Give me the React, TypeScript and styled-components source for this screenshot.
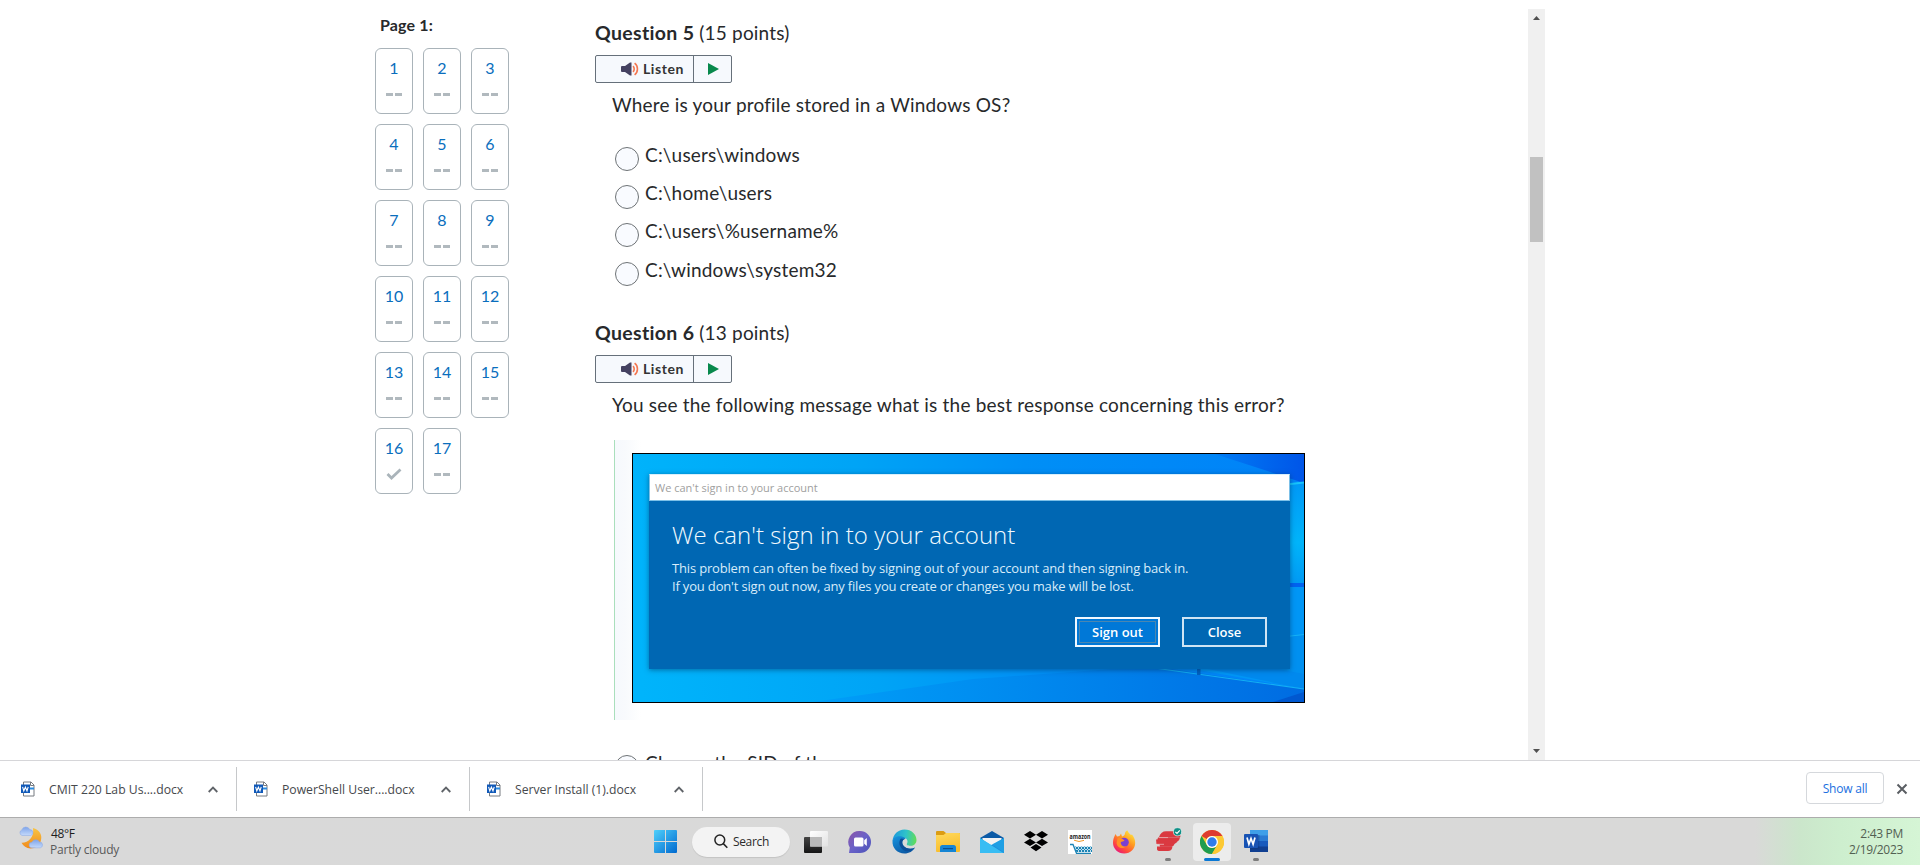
import React from 'react';
import styled, { createGlobalStyle } from 'styled-components';

const GlobalStyle = createGlobalStyle`
  * { box-sizing: border-box; }
  body { margin: 0; background: #fff; overflow: hidden; }
`;

const lato = `Lato, "Liberation Sans", sans-serif`;
const segoe = `"Open Sans", "Noto Sans", sans-serif`;

const Screen = styled.div`
  width: 1920px;
  height: 865px;
  display: flex;
  flex-direction: column;
  overflow: hidden;
  background: #fff;
`;

/* ---------- quiz page ---------- */

const Page = styled.main`
  height: 760px;
  display: flex;
  overflow: hidden;
  padding-left: 375px;
  font-family: ${lato};
  color: #27292b;
`;

const Sidebar = styled.nav`
  width: 220px;
  padding-top: 15px;
`;

const PageLabel = styled.div`
  padding-left: 5px;
  font-size: 16px;
  font-weight: 700;
  line-height: 20px;
  letter-spacing: 0.15px;
`;

const TileGrid = styled.div`
  margin-top: 13px;
  display: grid;
  grid-template-columns: repeat(3, 38px);
  gap: 10px;
`;

const Tile = styled.a`
  height: 66px;
  padding-top: 9px;
  border: 1px solid #a9b3b9;
  border-radius: 6px;
  display: flex;
  flex-direction: column;
  align-items: center;
`;

const TileNumber = styled.span`
  font-size: 16px;
  line-height: 20px;
  color: #0a6ebd;
`;

const TileState = styled.span`
  height: 32px;
  display: flex;
  align-items: center;
  gap: 2px;
`;

const Dash = styled.span`
  width: 7px;
  height: 3px;
  background: #b1b9be;
`;

const Questions = styled.section`
  width: 933px;
  padding-top: 21px;
`;

const Question = styled.article`
  margin-bottom: 35px;
`;

const Heading = styled.h2`
  margin: 0;
  font-size: 19px;
  font-weight: 400;
  line-height: 24px;
  letter-spacing: 0.19px;
  white-space: nowrap;

  b {
    font-size: 19.5px;
    letter-spacing: 0.32px;
  }
`;

const Listen = styled.div`
  width: 137px;
  height: 28px;
  margin-top: 10px;
  display: flex;
  border: 1px solid #66707a;
  border-radius: 2px;
  background: #f6f9fd;
`;

const ListenMain = styled.button`
  width: 98px;
  padding: 0 0 0 25px;
  border: 0;
  border-right: 1px solid #66707a;
  background: none;
  display: flex;
  align-items: center;
  gap: 4px;
  font: 700 14px/26px ${lato};
  letter-spacing: 0.6px;
  color: #333;
`;

const ListenPlay = styled.button`
  flex: 1;
  padding: 0 0 0 1px;
  border: 0;
  background: none;
  display: flex;
  align-items: center;
  justify-content: center;
`;

const QuestionBody = styled.div`
  margin-top: 10px;
  padding-left: 17px;
`;

const Prompt = styled.p`
  margin: 0;
  font-size: 19px;
  line-height: 24px;
  letter-spacing: 0.2px;
  white-space: nowrap;
`;

const Options = styled.div<{ $top: number }>`
  margin-top: ${(p) => p.$top}px;
  padding-left: 3px;
  display: flex;
  flex-direction: column;
  gap: 10px;
`;

const Option = styled.label`
  height: 28px;
  display: flex;
  gap: 6px;
  font-size: 19px;
  line-height: 24px;
  letter-spacing: 0.19px;
  white-space: nowrap;

  &:nth-child(4) { margin-top: 1px; }
`;

const Radio = styled.span`
  width: 24px;
  height: 24px;
  margin-top: 4px;
  flex: none;
  border: 1px solid #6e7376;
  border-radius: 50%;
  background: #f9fbff;
`;

const Quote = styled.blockquote`
  height: 280px;
  margin: 23px 0 0 2px;
  padding: 13px 0 0 17px;
  border-left: 1px solid #a9dfbc;
  background: linear-gradient(90deg, #f6f9fd 0, #f8fafd 10px, #fcfdfe 20px, #fff 26px);
`;

const Shot = styled.figure`
  position: relative;
  width: 673px;
  height: 250px;
  margin: 0;
  padding: 20px 0 0 16px;
  border: 1px solid #000;
  overflow: hidden;
`;

const Wallpaper = styled.svg`
  position: absolute;
  inset: 0;
`;

const Dialog = styled.div`
  position: relative;
  width: 641px;
  height: 195px;
  background: #0067b3;
  box-shadow: 0 1px 5px rgba(0, 50, 90, 0.55);
  font-family: ${segoe};
  color: #d8ecfa;
`;

const DialogBar = styled.div`
  height: 27px;
  padding-left: 5px;
  background: #fff;
  border: 1px solid #7cc0e8;
  border-top-color: #d9effb;
  font-size: 11px;
  line-height: 25px;
  color: #a0a0a0;
`;

const DialogBody = styled.div`
  padding: 18px 23px 0;
`;

const DialogTitle = styled.div`
  font-size: 24px;
  font-weight: 300;
  line-height: 32px;
  letter-spacing: 0.03px;
  color: #f2fafe;
`;

const DialogText = styled.div`
  margin-top: 8px;
  font-size: 13px;
  line-height: 18px;
  letter-spacing: -0.17px;
  white-space: nowrap;
`;

const DialogButtons = styled.div`
  margin-top: 22px;
  display: flex;
  justify-content: flex-end;
  gap: 22px;
`;

const DialogButton = styled.button<{ $focus?: boolean }>`
  width: 85px;
  height: 30px;
  padding: 0;
  border: 2px solid ${(p) => (p.$focus ? '#f0f8ff' : '#cfe4f4')};
  background: ${(p) => (p.$focus ? '#0078d7' : '#0067b3')};
  outline: ${(p) => (p.$focus ? '1px solid #4b86b0' : 'none')};
  outline-offset: -5px;
  font: 600 13px/24px ${segoe};
  color: #fff;
`;

const Scrollbar = styled.div`
  width: 17px;
  height: 751px;
  margin-top: 9px;
  background: #f0f0f0;
  display: flex;
  flex-direction: column;
  align-items: center;
`;

const Arrow = styled.svg<{ $end?: boolean }>`
  margin-top: ${(p) => (p.$end ? 'auto' : '7px')};
  margin-bottom: ${(p) => (p.$end ? '7px' : '0')};
`;

const Thumb = styled.div`
  width: 13px;
  height: 85px;
  margin-top: 137px;
  background: #c1c1c1;
`;

/* ---------- download shelf ---------- */

const Shelf = styled.footer`
  height: 57px;
  display: flex;
  border-top: 1px solid #d6d6d9;
  background: #fff;
  font-family: ${segoe};
`;

const Download = styled.div`
  width: 233px;
  height: 44px;
  margin-top: 6px;
  padding: 0 18px 0 17px;
  border-right: 1px solid #c6c8ca;
  display: flex;
  align-items: center;

  &:first-child { width: 237px; padding-left: 21px; }
`;

const FileName = styled.span`
  margin: 1px auto 0 14px;
  font-size: 12.2px;
  color: #46484c;
  white-space: nowrap;
`;

const ShowAll = styled.button`
  width: 78px;
  height: 32px;
  margin: 11px 0 0 auto;
  padding: 0;
  border: 1px solid #d5d8dc;
  border-radius: 4px;
  background: #fff;
  font: 500 12px ${segoe};
  letter-spacing: -0.2px;
  color: #1a6fe0;
`;

const CloseMark = styled.svg`
  margin: 22px 12px 0 12px;
`;

/* ---------- taskbar ---------- */

const Taskbar = styled.footer`
  height: 48px;
  display: flex;
  align-items: center;
  border-top: 1px solid #adadad;
  background: linear-gradient(90deg, #d9d9d9 0, #d9d9d8 1755px, #cbe6cb 1800px, #cdeece 1840px, #d5f5d5 1920px);
  font-family: ${segoe};
  font-size: 12px;
`;

const Weather = styled.div`
  width: 643px;
  padding: 0 0 0 19px;
  display: flex;
  gap: 7px;
  line-height: 16px;
  letter-spacing: -0.22px;
  color: #1d1d1d;

  p { margin: 0; }
  p:first-child { padding-left: 1px; letter-spacing: -0.4px; }
  p + p { color: #5a5a5a; }
`;

const TaskItem = styled.div<{ $active?: boolean; $gap?: number }>`
  position: relative;
  width: 38px;
  height: 38px;
  margin: 0 3px 0 ${(p) => 3 + (p.$gap || 0)}px;
  border-radius: 4px;
  background: ${(p) => (p.$active ? '#ececec' : 'transparent')};
  display: flex;
  align-items: center;
  justify-content: center;
`;

const Indicator = styled.span<{ $active?: boolean }>`
  position: absolute;
  bottom: 0;
  left: 50%;
  width: ${(p) => (p.$active ? 16 : 6)}px;
  height: 3px;
  transform: translateX(-50%);
  border-radius: 2px;
  background: ${(p) => (p.$active ? '#0a78d4' : '#7c7c7c')};
`;

const SearchPill = styled.div`
  width: 98px;
  height: 30px;
  margin-left: 5px;
  padding-left: 22px;
  border-radius: 15px;
  background: #f3f3f3;
  box-shadow: 0 1px 1px rgba(0, 0, 0, 0.1);
  display: flex;
  align-items: center;
  gap: 5px;
  letter-spacing: -0.35px;
  color: #2b2b2b;
`;

const Clock = styled.div`
  margin-left: auto;
  padding-right: 17px;
  text-align: right;
  line-height: 16px;
  letter-spacing: -0.32px;
  color: #526052;
`;

/* ---------- drawings ---------- */

const Speaker = () => (
  <svg width="18" height="14" viewBox="0 0 18 14">
    <path d="M0 4.5 1 4H4L9 0.5H10.5V13.5H9L4 10H1L0 9.5Z" fill="#454261" />
    <path d="M12 4.2C13.6 5.6 13.6 8.4 12 9.8M13.6 1.2C17.4 4 17.4 10 13.6 12.8" fill="none" stroke="#f4764f" strokeWidth="1.6" />
  </svg>
);

const WordFile = () => (
  <svg width="14" height="16" viewBox="0 0 14 16">
    <path d="M2.5 4V1H10L13 4V15H2.5V12" fill="#fff" stroke="#777b80" />
    <path d="M9.5 1V4.5H13" fill="none" stroke="#777b80" />
    <rect x="8" y="6.5" width="5" height="2" fill="#2b8be0" />
    <rect x="0" y="3.5" width="9" height="8.5" fill="#1059b8" />
    <path d="M1.6 5.8 2.8 9.8 4.4 6.2 6 9.8 7.2 5.8" fill="none" stroke="#fff" strokeWidth="1.1" />
  </svg>
);

const Caret = () => (
  <svg width="10" height="7" viewBox="0 0 10 7">
    <path d="M0.7 6 5 1.6 9.3 6" fill="none" stroke="#5f6368" strokeWidth="1.8" />
  </svg>
);

const WeatherIcon = () => (
  <svg width="24" height="24" viewBox="0 0 24 24">
    <defs>
      <linearGradient id="moon" x1="0" y1="0" x2="0" y2="1">
        <stop offset="0" stopColor="#f8c443" />
        <stop offset="1" stopColor="#f08a1c" />
      </linearGradient>
      <linearGradient id="cloud" x1="0" y1="0" x2="0" y2="1">
        <stop offset="0" stopColor="#7ea4ea" />
        <stop offset="1" stopColor="#c3d9fb" />
      </linearGradient>
    </defs>
    <path d="M14 2C20 3.5 23.5 8.5 22 14C21 19.5 16.500 22.500 11.500 22.500C7.500 22.300 4.200 20 2.500 16.700C9 17 15.500 11.500 14 2Z" fill="url(#moon)" />
    <path d="M3 9.500A3 3 0 0 1 2.800 3.900A4.300 4.300 0 0 1 10.800 3.600A3 3 0 0 1 11.700 9.500Z" fill="url(#cloud)" stroke="#86a7e6" strokeWidth="0.5" />
    <path d="M13 21.800A2.800 2.800 0 0 1 12.800 16.200A4.300 4.300 0 0 1 20.500 15.900A3 3 0 0 1 21.300 21.800Z" fill="url(#cloud)" stroke="#86a7e6" strokeWidth="0.5" />
  </svg>
);

const WindowsIcon = () => (
  <svg width="23" height="23" viewBox="0 0 23 23">
    <defs>
      <linearGradient id="win" x1="0" y1="0" x2="23" y2="23" gradientUnits="userSpaceOnUse">
        <stop offset="0" stopColor="#4fd0fb" />
        <stop offset="1" stopColor="#0069cf" />
      </linearGradient>
    </defs>
    <path d="M1 0H11V11H0V1Q0 0 1 0ZM12 0H22Q23 0 23 1V11H12ZM0 12H11V23H1Q0 23 0 22ZM12 12H23V22Q23 23 22 23H12Z" fill="url(#win)" />
  </svg>
);

const Magnifier = () => (
  <svg width="14" height="15" viewBox="0 0 14 15">
    <circle cx="5.8" cy="6" r="4.9" fill="none" stroke="#222" strokeWidth="1.5" />
    <path d="M9.3 9.6 13.3 13.8" stroke="#222" strokeWidth="1.6" />
  </svg>
);

const TaskView = () => (
  <svg width="24" height="23" viewBox="0 0 24 23">
    <defs>
      <linearGradient id="tvd" x1="0" y1="0" x2="0" y2="1">
        <stop offset="0" stopColor="#444" />
        <stop offset="1" stopColor="#151515" />
      </linearGradient>
      <linearGradient id="tvl" x1="0" y1="0" x2="1" y2="1">
        <stop offset="0" stopColor="#fff" />
        <stop offset="1" stopColor="#e2e2e2" />
      </linearGradient>
    </defs>
    <rect x="0" y="7" width="18" height="16" rx="1" fill="url(#tvd)" />
    <rect x="6" y="1" width="18" height="15.5" rx="1" fill="url(#tvl)" />
    <path d="M6 7H18V16.5H6Z" fill="#b9b9b9" />
  </svg>
);

const ChatIcon = () => (
  <svg width="24" height="24" viewBox="0 0 24 24">
    <defs>
      <linearGradient id="chat" x1="0" y1="0" x2="1" y2="1">
        <stop offset="0" stopColor="#8c55a8" />
        <stop offset="0.5" stopColor="#6a62c8" />
        <stop offset="1" stopColor="#4a52b8" />
      </linearGradient>
    </defs>
    <path d="M12 1A11 11 0 1 1 12 23H1L1.8 17.5A11 11 0 0 1 12 1Z" fill="url(#chat)" />
    <rect x="6" y="7.5" width="9.5" height="9" rx="1.5" fill="#fff" />
    <path d="M16.2 10.2 18.8 8V16L16.2 13.8Z" fill="#fff" />
  </svg>
);

const EdgeIcon = () => (
  <svg width="25" height="25" viewBox="0 0 25 25">
    <defs>
      <linearGradient id="edgeTop" x1="0" y1="0.4" x2="1" y2="0.5">
        <stop offset="0" stopColor="#1c98dc" />
        <stop offset="0.55" stopColor="#2fc3c9" />
        <stop offset="1" stopColor="#62dd58" />
      </linearGradient>
      <linearGradient id="edgeLow" x1="0" y1="0" x2="0.6" y2="1">
        <stop offset="0" stopColor="#1795e0" />
        <stop offset="1" stopColor="#0c59a4" />
      </linearGradient>
    </defs>
    <path d="M0.5 12C1 5.5 6 0.5 12.5 0.5C19.5 0.5 24.5 5.5 24.5 11C24.5 14.5 22 16.8 18.5 16.8C15.5 16.8 14 15.8 15.2 14C16 12.5 15.5 9.5 12.5 9C8 7.5 2 9 0.5 12Z" fill="url(#edgeTop)" />
    <path d="M0.5 12C1.5 8 6 6.5 10 7.5C13.5 8.5 14 10 13 10C10 10.5 9.5 14 11.5 16.8C14 20 19.5 20.5 23 18.5C21 22.3 17 24.5 12.5 24.5C5.5 24.5 0 19 0.5 12Z" fill="url(#edgeLow)" />
    <path d="M9 9.5C6.5 12 6.5 18 12 21.5C16 23.5 21 21 23 18.5C19.5 20.5 14 20 11.5 16.8C9.5 14 10 10.5 13 10Z" fill="#0b4e98" />
  </svg>
);

const FolderIcon = () => (
  <svg width="24" height="23" viewBox="0 0 24 23">
    <defs>
      <linearGradient id="fold" x1="0" y1="0" x2="0.3" y2="1">
        <stop offset="0" stopColor="#ffd95c" />
        <stop offset="1" stopColor="#f8bd2c" />
      </linearGradient>
    </defs>
    <path d="M0 2Q0 1 1 1H7.5L10 3H23Q24 3 24 4V8H0Z" fill="#dc9c12" />
    <path d="M0 5H7.5L10 3H23Q24 3 24 4V21Q24 22 23 22H1Q0 22 0 21Z" fill="url(#fold)" />
    <path d="M4 22V17.5Q4 15 6.5 15H17.5Q20 15 20 17.5V22Z" fill="#1585d4" />
    <rect x="7" y="18" width="10" height="1.2" fill="#0a4f8f" />
  </svg>
);

const MailIcon = () => (
  <svg width="24" height="24" viewBox="0 0 24 24">
    <path d="M0 8 12 1 24 8V12H0Z" fill="#0d5ba6" />
    <path d="M2.5 8H21.5V12L12 17 2.5 12Z" fill="#f3f3f3" />
    <path d="M0 8 12 15.5 24 8V22Q24 23 23 23H1Q0 23 0 22Z" fill="#2cb3ee" />
    <path d="M2.5 8H21.5L12 14.5Z" fill="#f3f3f3" />
    <path d="M12 14.5 24 8V22Q24 23 23.500 23Z" fill="#1f9fe4" />
    <path d="M12 14.5 24 22.500Q24 23 23 23H1Q0.5 23 0.3 22.7Z" fill="#1d8edb" />
    <path d="M0 8 23.500 23H1Q0 23 0 22Z" fill="#38bdf3" />
  </svg>
);

const DropboxIcon = () => (
  <svg width="24" height="22" viewBox="0 0 24 22">
    <path d="M6 0 12 3.7 6 7.5 0 3.7ZM18 0 24 3.7 18 7.5 12 3.7ZM6 7.8 12 11.4 6 15.1 0 11.4ZM18 7.8 24 11.4 18 15.1 12 11.4ZM12 13 17.5 16.6 12 20.3 6.5 16.6Z" fill="#000" />
  </svg>
);

const AmazonIcon = () => (
  <svg width="24" height="24" viewBox="0 0 24 24">
    <defs>
      <pattern id="mesh" width="3" height="3" patternUnits="userSpaceOnUse">
        <rect width="3" height="3" fill="#bfe0ee" />
        <path d="M0 0 3 3M3 0 0 3" stroke="#1b83b4" strokeWidth="1" />
      </pattern>
    </defs>
    <rect width="24" height="24" fill="#fff" />
    <text x="12" y="9" textAnchor="middle" textLength="21" lengthAdjust="spacingAndGlyphs" fontFamily="Open Sans, sans-serif" fontWeight="700" fontSize="6.2" fill="#222">amazon</text>
    <path d="M6 10.2Q11 12.7 16 10.4" fill="none" stroke="#f09a2a" strokeWidth="1" />
    <path d="M6.5 16.5H24V22H8.5Z" fill="url(#mesh)" />
    <path d="M2 14.5H5L8.5 23.3H23" fill="none" stroke="#1b83b4" strokeWidth="1.3" />
  </svg>
);

const FirefoxIcon = () => (
  <svg width="24" height="24" viewBox="0 0 24 24">
    <defs>
      <linearGradient id="fox" x1="0.85" y1="0.05" x2="0.2" y2="0.95">
        <stop offset="0" stopColor="#ffe844" />
        <stop offset="0.4" stopColor="#ff9a20" />
        <stop offset="0.75" stopColor="#ff4a3c" />
        <stop offset="1" stopColor="#e8187c" />
      </linearGradient>
    </defs>
    <path d="M3.5 4L5 6.5 7.5 6 9 3.5 10 6.5C12 6 13 5 13 3C13.5 1.5 14.5 0.8 15.5 0.5C16 2.5 17.5 3.5 19 5L20 4.5C22 7 23.2 9.5 23.2 13C23 19 18.5 23.5 12.3 23.5C6 23.5 1 19 1 12.8C1 9.5 2 7 3.5 4Z" fill="url(#fox)" />
    <circle cx="12.2" cy="12.3" r="4.6" fill="#7a3fd0" />
    <path d="M5.5 8.5C8 7.5 10.5 8.5 12.5 10.5C11 12 10 11.3 8.7 12.3C8.5 15 11 17.3 14.5 16.3C10.5 20 5 17.5 4.6 13Z" fill="#ff9026" />
  </svg>
);

const VpnIcon = () => (
  <svg width="28" height="32" viewBox="0 0 28 32">
    <g fill="#da3940">
      <path d="M5 11Q7 5.300 12 5.300H20.500Q25.500 6 26.500 10L26 11.500H5Z" />
      <path d="M4 11.500H26Q25.500 14 24 15H3Z" />
      <path d="M2 13.500H24.500Q23.500 17 20.500 18H2.500Z" />
      <path d="M5.500 18H20.500Q20 20 17.500 20.800H6Z" />
      <path d="M3 20.500H18.500Q18 25 14 25H6Q3 25 3 23Z" />
    </g>
    <path d="M5 11.600H14M3 18.300H10" stroke="#e7b8ba" strokeWidth="0.8" />
    <circle cx="23.5" cy="5.8" r="4.1" fill="#0f8f86" stroke="#e8f2f1" strokeWidth="0.7" />
    <path d="M21.400 5.900 23 7.500 25.800 4.400" fill="none" stroke="#fff" strokeWidth="1.2" />
  </svg>
);

const ChromeIcon = () => (
  <svg width="24" height="24" viewBox="0 0 24 24">
    <circle cx="12" cy="12" r="12" fill="#fcc934" />
    <path d="M1.6 6A12 12 0 0 1 22.4 6H12A6 6 0 0 0 6.8 9Z" fill="#de3b2f" />
    <path d="M1.6 6A12 12 0 0 0 12 24L17.2 15A6 6 0 0 1 6.8 15Z" fill="#1f9d50" />
    <path d="M22.4 6A12 12 0 0 1 12 24L17.2 15A6 6 0 0 0 17 8.7L12 6Z" fill="#fcc934" />
    <circle cx="12" cy="12" r="6" fill="#fff" />
    <circle cx="12" cy="12" r="4.7" fill="#2f7cea" />
  </svg>
);

const WordIcon = () => (
  <svg width="24" height="23" viewBox="0 0 24 23">
    <rect x="6" y="0" width="18" height="6" fill="#3f9fe8" />
    <rect x="6" y="5.5" width="18" height="6" fill="#2b7bd3" />
    <rect x="6" y="11" width="18" height="6" fill="#185abd" />
    <rect x="6" y="16.5" width="18" height="5.5" fill="#103f91" />
    <rect x="6" y="5" width="9.5" height="14.5" fill="#0b2f6b" opacity="0.35" />
    <rect x="0" y="4" width="14" height="14" rx="1" fill="#1853b4" />
    <path d="M3 7.5 4.9 14.2 7 8.5 9.1 14.2 11 7.5" fill="none" stroke="#fff" strokeWidth="1.7" />
  </svg>
);

const DesktopArt = () => (
  <Wallpaper width="671" height="248" viewBox="0 0 671 248">
    <defs>
      <linearGradient id="sky" x1="0" y1="160" x2="671" y2="90" gradientUnits="userSpaceOnUse">
        <stop offset="0" stopColor="#00b4fb" />
        <stop offset="0.35" stopColor="#00a4f6" />
        <stop offset="0.6" stopColor="#008ff6" />
        <stop offset="1" stopColor="#0082f8" />
      </linearGradient>
      <linearGradient id="corner" x1="0" y1="0" x2="1" y2="0">
        <stop offset="0" stopColor="#007cf4" />
        <stop offset="1" stopColor="#0055e8" />
      </linearGradient>
      <linearGradient id="pane" x1="0" y1="0" x2="0" y2="1">
        <stop offset="0" stopColor="#0098f6" />
        <stop offset="0.6" stopColor="#00b4fa" />
        <stop offset="1" stopColor="#009af4" />
      </linearGradient>
      <linearGradient id="floor" x1="0" y1="0" x2="1" y2="0">
        <stop offset="0" stopColor="#009ff8" />
        <stop offset="1" stopColor="#006ce2" />
      </linearGradient>
    </defs>
    <rect width="671" height="248" fill="url(#sky)" />
    <path d="M582 0 671 29V0Z" fill="url(#corner)" />
    <path d="M640 31 671 28V129H640Z" fill="url(#pane)" />
    <path d="M640 32 671 28.5" stroke="#17c4fb" strokeWidth="2" />
    <rect x="640" y="129" width="31" height="4" fill="#0062f0" />
    <path d="M640 133H671V235L560 215H640Z" fill="#0096f6" />
    <path d="M640 184 671 180V235L640 222Z" fill="#0090f0" />
    <path d="M640 184 671 180.5" stroke="#16b4f8" strokeWidth="1" />
    <path d="M180 248 340 225 520 212 671 235V248Z" fill="url(#floor)" />
    <path d="M570 214H640L671 220V235Z" fill="#0089ee" />
    <path d="M500 211 671 235" stroke="#12b0f4" strokeWidth="1.2" />
    <rect x="564" y="214" width="3.5" height="7" fill="#0060c0" />
    <path d="M640 248 671 238V248Z" fill="#0058d0" />
  </Wallpaper>
);

/* ---------- screen ---------- */

const ListenBar = () => (
  <Listen>
    <ListenMain><Speaker />Listen</ListenMain>
    <ListenPlay>
      <svg width="11" height="12" viewBox="0 0 11 12"><path d="M0 0 11 6 0 12Z" fill="#08894c" /></svg>
    </ListenPlay>
  </Listen>
);

const pages = Array.from({ length: 17 }, (_, i) => i + 1);
const answers = ['C:\\users\\windows', 'C:\\home\\users', 'C:\\users\\%username%', 'C:\\windows\\system32'];
const downloads = ['CMIT 220 Lab Us....docx', 'PowerShell User....docx', 'Server Install (1).docx'];

export default function App() {
  return (
    <Screen>
      <GlobalStyle />
      <Page>
        <Sidebar>
          <PageLabel>Page 1:</PageLabel>
          <TileGrid>
            {pages.map((n) => (
              <Tile key={n}>
                <TileNumber>{n}</TileNumber>
                <TileState>
                  {n === 16 ? (
                    <svg width="16" height="12" viewBox="0 0 16 12">
                      <path d="M1.5 6 5.5 10 14.5 1.5" fill="none" stroke="#aab4ba" strokeWidth="2.8" />
                    </svg>
                  ) : (
                    <><Dash /><Dash /></>
                  )}
                </TileState>
              </Tile>
            ))}
          </TileGrid>
        </Sidebar>
        <Questions>
          <Question>
            <Heading><b>Question 5</b> (15 points)</Heading>
            <ListenBar />
            <QuestionBody>
              <Prompt>Where is your profile stored in a Windows OS?</Prompt>
              <Options $top={26}>
                {answers.map((a) => <Option key={a}><Radio />{a}</Option>)}
              </Options>
            </QuestionBody>
          </Question>
          <Question>
            <Heading><b>Question 6</b> (13 points)</Heading>
            <ListenBar />
            <QuestionBody>
              <Prompt>You see the following message what is the best response concerning this error?</Prompt>
              <Quote>
                <Shot>
                  <DesktopArt />
                  <Dialog>
                    <DialogBar>We can't sign in to your account</DialogBar>
                    <DialogBody>
                      <DialogTitle>We can't sign in to your account</DialogTitle>
                      <DialogText>
                        This problem can often be fixed by signing out of your account and then signing back in.<br />
                        If you don't sign out now, any files you create or changes you make will be lost.
                      </DialogText>
                      <DialogButtons>
                        <DialogButton $focus>Sign out</DialogButton>
                        <DialogButton>Close</DialogButton>
                      </DialogButtons>
                    </DialogBody>
                  </Dialog>
                </Shot>
              </Quote>
              <Options $top={31}>
                <Option><Radio />Change the SID of the</Option>
              </Options>
            </QuestionBody>
          </Question>
        </Questions>
        <Scrollbar>
          <Arrow width="7" height="4" viewBox="0 0 7 4"><path d="M0 4 3.5 0 7 4Z" fill="#505050" /></Arrow>
          <Thumb />
          <Arrow $end width="7" height="4" viewBox="0 0 7 4"><path d="M0 0 3.5 4 7 0Z" fill="#505050" /></Arrow>
        </Scrollbar>
      </Page>
      <Shelf>
        {downloads.map((d) => (
          <Download key={d}><WordFile /><FileName>{d}</FileName><Caret /></Download>
        ))}
        <ShowAll>Show all</ShowAll>
        <CloseMark width="12" height="12" viewBox="0 0 12 12">
          <path d="M1.5 1.5 10.5 10.5M10.5 1.5 1.5 10.5" stroke="#5a5e63" strokeWidth="2" />
        </CloseMark>
      </Shelf>
      <Taskbar>
        <Weather>
          <WeatherIcon />
          <div><p>48°F</p><p>Partly cloudy</p></div>
        </Weather>
        <TaskItem><WindowsIcon /></TaskItem>
        <SearchPill><Magnifier />Search</SearchPill>
        <TaskItem $gap={4}><TaskView /></TaskItem>
        <TaskItem><ChatIcon /></TaskItem>
        <TaskItem><EdgeIcon /></TaskItem>
        <TaskItem><FolderIcon /></TaskItem>
        <TaskItem><MailIcon /></TaskItem>
        <TaskItem><DropboxIcon /></TaskItem>
        <TaskItem><AmazonIcon /></TaskItem>
        <TaskItem><FirefoxIcon /></TaskItem>
        <TaskItem><VpnIcon /><Indicator /></TaskItem>
        <TaskItem $active><ChromeIcon /><Indicator $active /></TaskItem>
        <TaskItem><WordIcon /><Indicator /></TaskItem>
        <Clock>2:43 PM<br />2/19/2023</Clock>
      </Taskbar>
    </Screen>
  );
}
